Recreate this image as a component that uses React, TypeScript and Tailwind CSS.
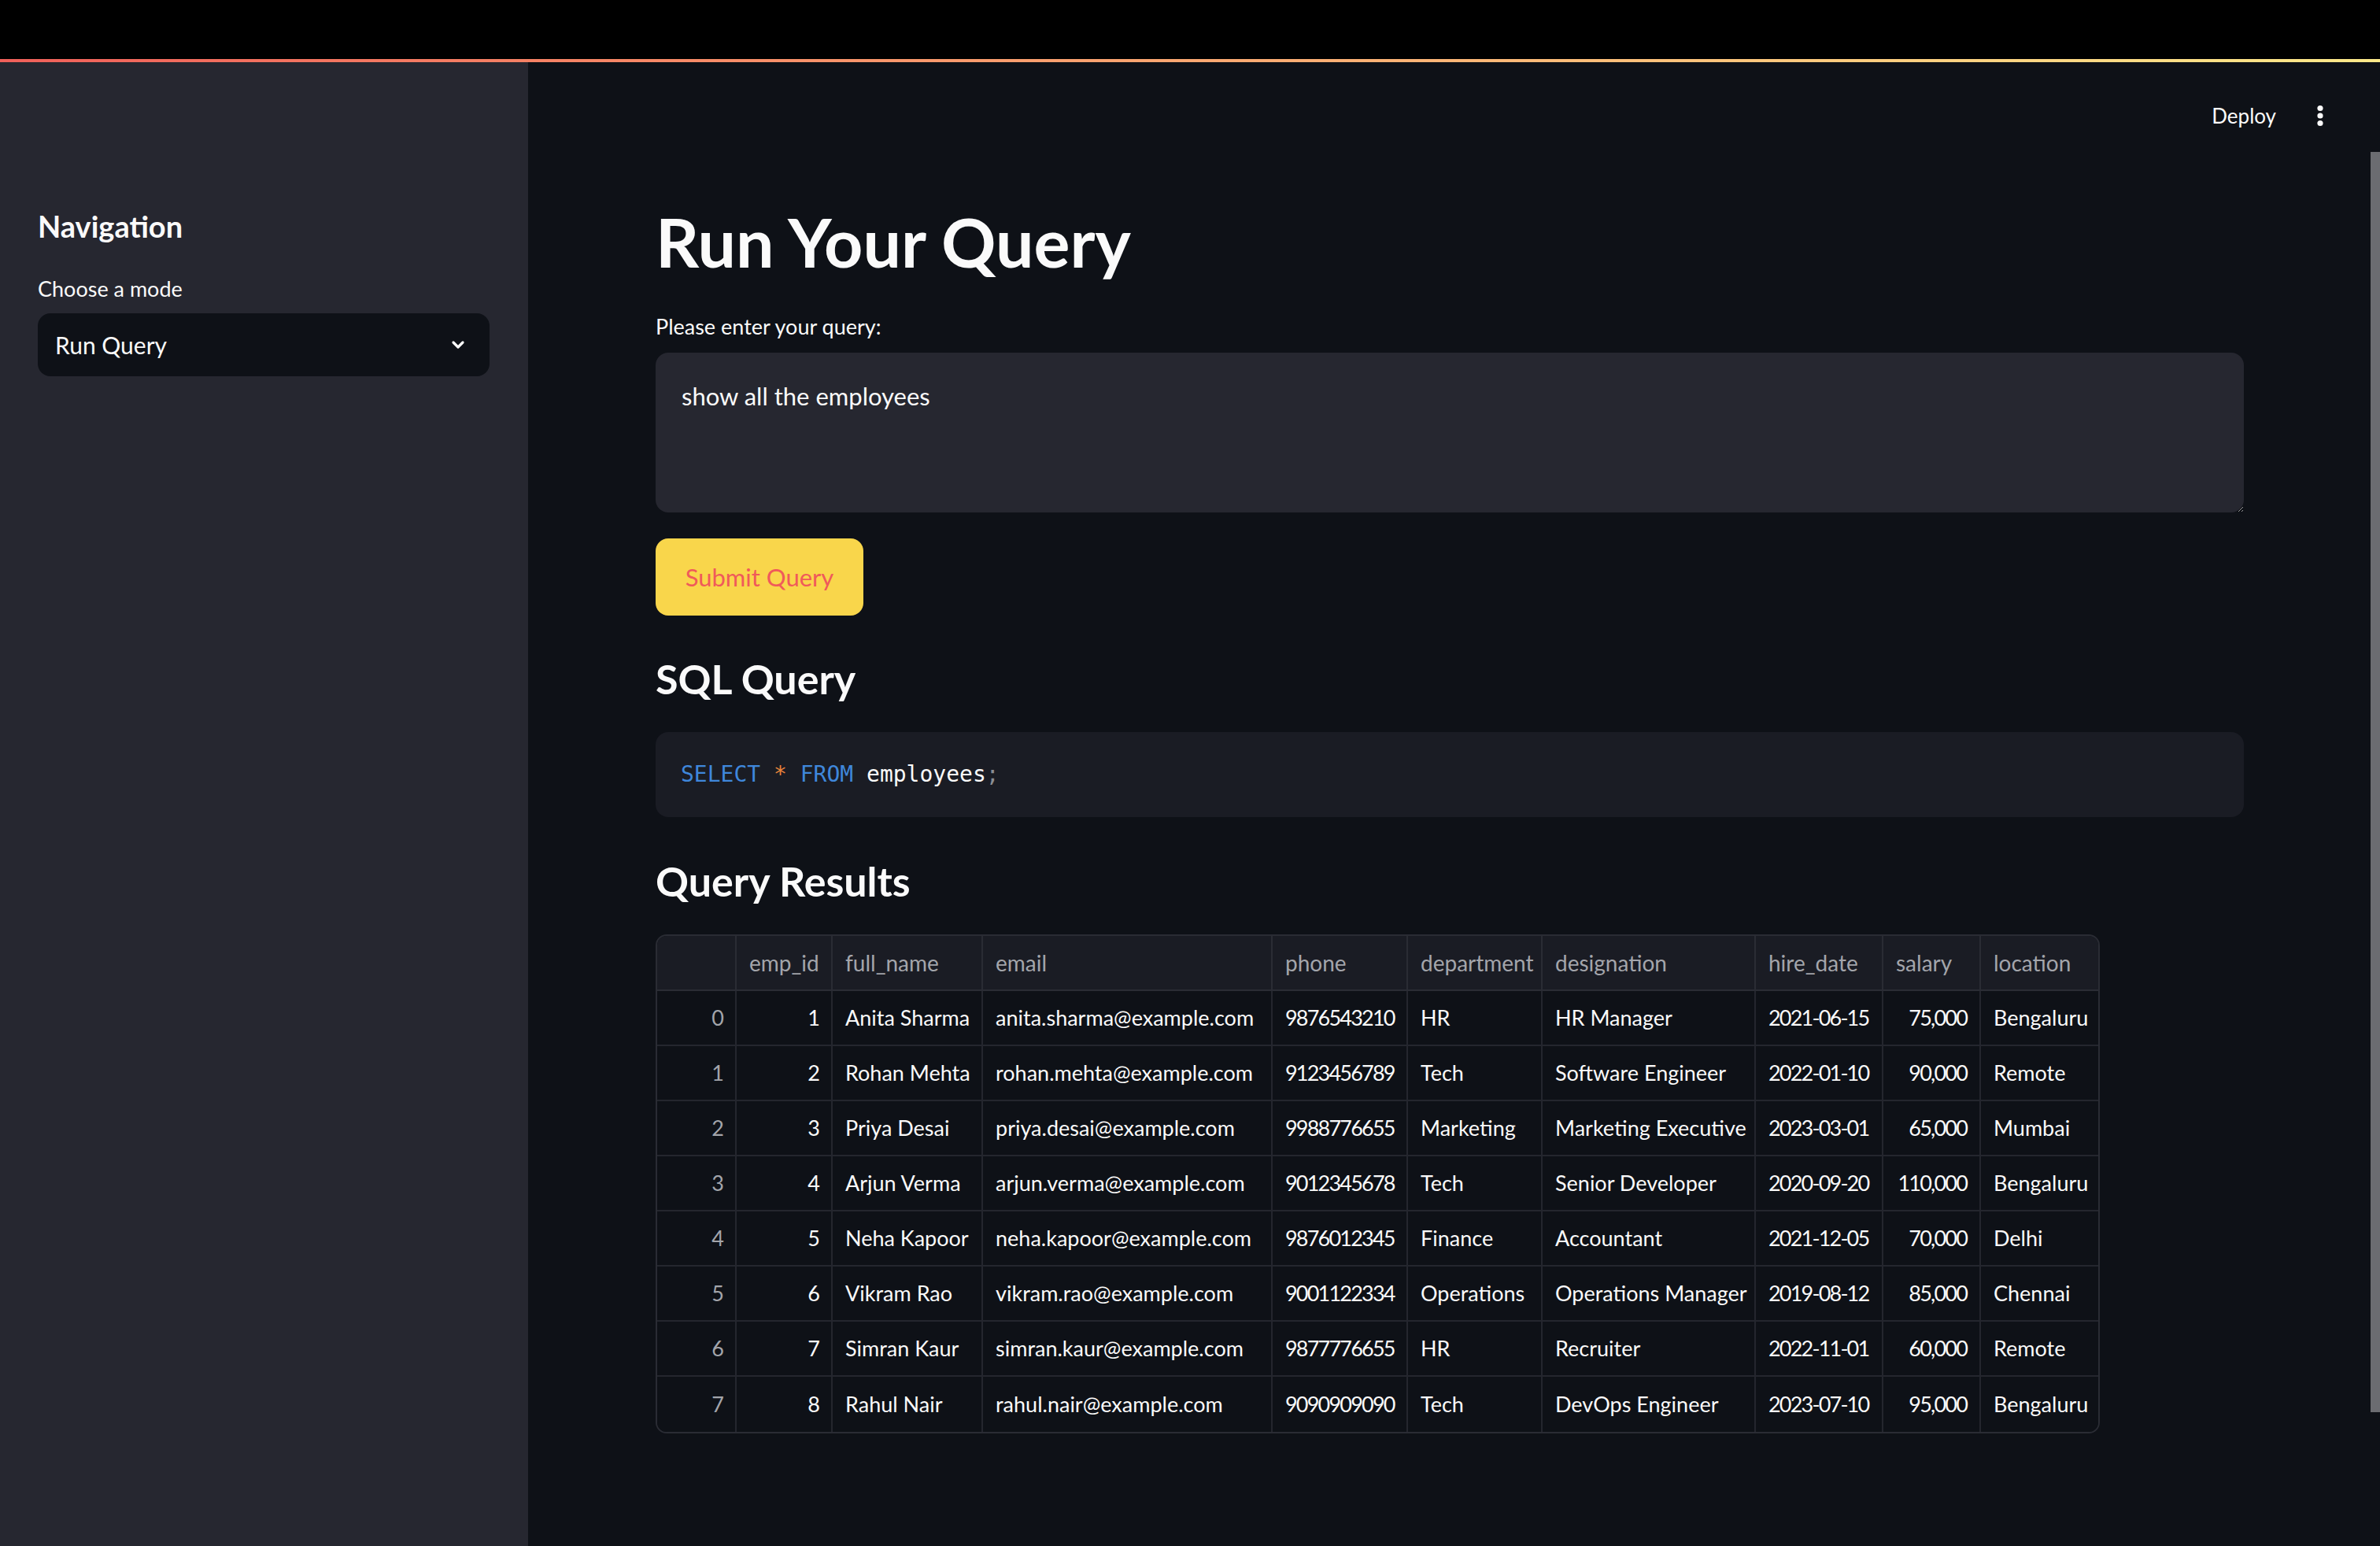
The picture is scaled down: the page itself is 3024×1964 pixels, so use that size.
import React from "react";
import { ChevronDown } from "lucide-react";

type Row = {
  id: number;
  name: string;
  email: string;
  phone: string;
  dept: string;
  role: string;
  hired: string;
  salary: string;
  location: string;
};

const rows: Row[] = [
  { id: 1, name: "Anita Sharma", email: "anita.sharma@example.com", phone: "9876543210", dept: "HR", role: "HR Manager", hired: "2021-06-15", salary: "75,000", location: "Bengaluru" },
  { id: 2, name: "Rohan Mehta", email: "rohan.mehta@example.com", phone: "9123456789", dept: "Tech", role: "Software Engineer", hired: "2022-01-10", salary: "90,000", location: "Remote" },
  { id: 3, name: "Priya Desai", email: "priya.desai@example.com", phone: "9988776655", dept: "Marketing", role: "Marketing Executive", hired: "2023-03-01", salary: "65,000", location: "Mumbai" },
  { id: 4, name: "Arjun Verma", email: "arjun.verma@example.com", phone: "9012345678", dept: "Tech", role: "Senior Developer", hired: "2020-09-20", salary: "110,000", location: "Bengaluru" },
  { id: 5, name: "Neha Kapoor", email: "neha.kapoor@example.com", phone: "9876012345", dept: "Finance", role: "Accountant", hired: "2021-12-05", salary: "70,000", location: "Delhi" },
  { id: 6, name: "Vikram Rao", email: "vikram.rao@example.com", phone: "9001122334", dept: "Operations", role: "Operations Manager", hired: "2019-08-12", salary: "85,000", location: "Chennai" },
  { id: 7, name: "Simran Kaur", email: "simran.kaur@example.com", phone: "9877776655", dept: "HR", role: "Recruiter", hired: "2022-11-01", salary: "60,000", location: "Remote" },
  { id: 8, name: "Rahul Nair", email: "rahul.nair@example.com", phone: "9090909090", dept: "Tech", role: "DevOps Engineer", hired: "2023-07-10", salary: "95,000", location: "Bengaluru" },
];

const headers = ["", "emp_id", "full_name", "email", "phone", "department", "designation", "hire_date", "salary", "location"];
const widths = [101, 122, 191, 368, 172, 171, 271, 162, 124, 153];
// columns holding digits: Lato's figures run wider than the original font
const numeric = [0, 1, 4, 7, 8];

const Sidebar = () => (
  <aside className="w-[671px] shrink-0 bg-[#262730] px-[48px] pt-[185px]">
    <h2 className="text-[38px] leading-[46px] font-bold text-[#fafafa]">Navigation</h2>
    <p className="mt-[37px] text-[27px] leading-[40px] text-[#fafafa]">Choose a mode</p>
    <div className="mt-[11px] flex h-[80px] w-[574px] items-center justify-between rounded-[16px] bg-[#0e1117] pl-[22px] pr-[28px]">
      <span className="text-[30px] text-[#fafafa]">Run Query</span>
      <ChevronDown className="h-[24px] w-[24px] text-[#fafafa]" strokeWidth={3.2} />
    </div>
  </aside>
);

const ResultsTable = () => (
  <div className="w-[1835px] overflow-hidden rounded-[14px] border-2 border-[#2a2c34]">
    <table className="w-full table-fixed border-separate border-spacing-0 text-[27px]">
      <colgroup>
        {widths.map((w, i) => (
          <col key={i} style={{ width: w }} />
        ))}
      </colgroup>
      <thead>
        <tr className="h-[70px] bg-[#1a1c24]">
          {headers.map((h, i) => (
            <th
              key={i}
              className={`border-b-2 border-[#2a2c34] px-[16px] text-left text-[28px] font-normal text-[#a3a5ab] ${i < headers.length - 1 ? "border-r-2" : ""}`}
            >
              {h}
            </th>
          ))}
        </tr>
      </thead>
      <tbody className="bg-[#0e1117] text-[#fafafa]">
        {rows.map((r, idx) => {
          const cells = [String(idx), String(r.id), r.name, r.email, r.phone, r.dept, r.role, r.hired, r.salary, r.location];
          const last = idx === rows.length - 1;
          return (
            <tr key={idx} className="h-[70px]">
              {cells.map((c, i) => (
                <td
                  key={i}
                  className={`whitespace-nowrap border-[#24262e] px-[16px] ${last ? "" : "border-b-2"} ${i < cells.length - 1 ? "border-r-2" : ""} ${numeric.includes(i) ? "tracking-[-1.8px]" : ""} ${i === 0 ? "text-right text-[#a3a5ab]" : ""} ${i === 1 || i === 8 ? "text-right" : ""}`}
                >
                  {c}
                </td>
              ))}
            </tr>
          );
        })}
      </tbody>
    </table>
  </div>
);

export default function App() {
  return (
    <div className="w-[3024px] h-[1964px] overflow-hidden bg-black font-['Lato',sans-serif]">
      <div className="h-[75px] bg-black" />
      <div className="h-[4px] bg-gradient-to-r from-[#f0605a] to-[#fce98a]" />
      <div className="flex h-[1885px]">
        <Sidebar />
        <main className="relative flex-1 bg-[#0e1117] pl-[162px] pr-[173px]">
          {/* top bar */}
          <div className="-mr-[173px] flex h-[136px] items-center justify-end gap-[52px] pr-[72px]">
            <span className="text-[26px] text-[#fafafa]">Deploy</span>
            <svg width="8" height="28" viewBox="0 0 8 28" className="text-[#fafafa]">
              <circle cx="4" cy="4.5" r="3.6" fill="currentColor" />
              <circle cx="4" cy="14" r="3.6" fill="currentColor" />
              <circle cx="4" cy="23.5" r="3.6" fill="currentColor" />
            </svg>
          </div>

          <h1 className="mt-[40px] text-[86px] leading-[104px] font-bold text-[#fafafa]">Run Your Query</h1>

          <p className="mt-[36px] text-[27px] leading-[40px] text-[#fafafa]">Please enter your query:</p>
          <textarea
            readOnly
            defaultValue="show all the employees"
            className="mt-[13px] block h-[203px] w-full rounded-[16px] bg-[#262730] px-[33px] py-[30px] text-[31px] leading-[51px] text-[#fafafa] outline-none"
          />

          <button className="mt-[33px] h-[98px] w-[264px] rounded-[16px] bg-[#f9d64b] text-[31px] text-[#f05a5a]">
            Submit Query
          </button>

          <h3 className="mt-[48px] text-[52px] leading-[64px] font-bold text-[#fafafa]">SQL Query</h3>
          <div className="mt-[36px] flex h-[108px] items-center rounded-[16px] bg-[#1a1c24] px-[32px] font-['DejaVu_Sans_Mono',monospace] text-[28px]">
            <span className="text-[#3f87db]">SELECT</span>
            <span className="whitespace-pre text-[#e8833a]"> * </span>
            <span className="text-[#3f87db]">FROM</span>
            <span className="whitespace-pre text-[#fafafa]"> employees</span>
            <span className="text-[#8b8d93]">;</span>
          </div>

          <h3 className="mt-[49px] text-[52px] leading-[64px] font-bold text-[#fafafa]">Query Results</h3>
          <div className="mt-[36px]">
            <ResultsTable />
          </div>

          {/* scrollbar thumb */}
          <div className="absolute right-0 top-[114px] h-[1601px] w-[12px] bg-[#6b6c71]" />
        </main>
      </div>
    </div>
  );
}
